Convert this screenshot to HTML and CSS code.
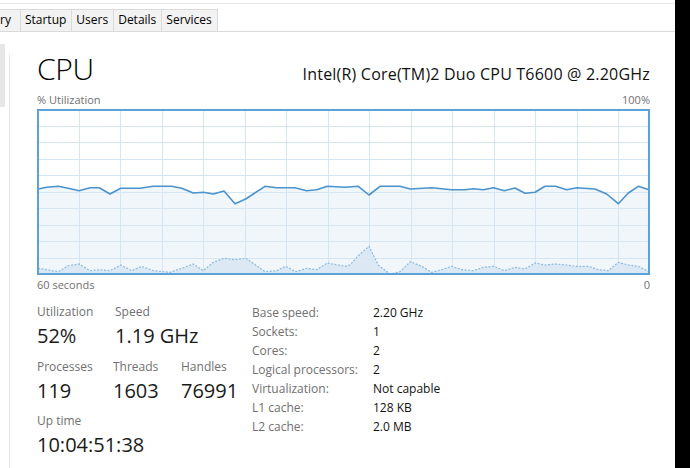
FILE: index.html
```html
<!DOCTYPE html>
<html>
<head>
<meta charset="utf-8">
<link rel="stylesheet" href="styles.css">
</head>
<body>
<div class="window">
  <div class="main">
    <div class="topline"></div>
    <div class="tabs">
      <div class="tab tab-cut">ry</div>
      <div class="tab">Startup</div>
      <div class="tab">Users</div>
      <div class="tab">Details</div>
      <div class="tab">Services</div>
    </div>
    <div class="content">
      <div class="side">
        <div class="side-thumb"></div>
        <div class="side-line"></div>
      </div>
      <div class="panel">
        <div class="header">
          <div class="title">CPU</div>
          <div class="model">Intel(R) Core(TM)2 Duo CPU T6600 @ 2.20GHz</div>
        </div>
        <div class="axis axis-top"><span>% Utilization</span><span>100%</span></div>
        <svg class="graph" width="613" height="166" viewBox="0 0 613 166">
          <polygon class="fill-total" points="1,80 9.7,78.3 21.3,77.3 31.3,79.3 42,81.7 53,78.7 62.3,78.7 73,85 83.7,79.3 103,79.3 116.3,77.3 134.7,77.3 144.7,79.3 156.3,84 166.3,83.3 176.3,85 187,82 198,94.7 208.7,90 228,77.3 239.7,78.7 258,78.7 269.7,81.7 279.7,80.7 290.3,77.3 308,78.3 321.3,77.3 332,86 343,77.3 363,77.3 373.3,80 394.7,78.7 414.7,80.7 428,80.7 436.3,79.7 446.3,80.7 456.7,78.7 467.3,81.7 478,79 488,84.3 498,83.3 508,77.3 518.7,77.3 529.7,80.7 539.7,78.7 558,80 569.7,85 581.3,94.7 591.3,84 601.3,77.3 612,80.7 612,165 1,165"/>
          <g class="grid">
            <line x1="42.5" y1="1" x2="42.5" y2="165"/>
            <line x1="83.5" y1="1" x2="83.5" y2="165"/>
            <line x1="125.5" y1="1" x2="125.5" y2="165"/>
            <line x1="166.5" y1="1" x2="166.5" y2="165"/>
            <line x1="208.5" y1="1" x2="208.5" y2="165"/>
            <line x1="249.5" y1="1" x2="249.5" y2="165"/>
            <line x1="291.5" y1="1" x2="291.5" y2="165"/>
            <line x1="332.5" y1="1" x2="332.5" y2="165"/>
            <line x1="374.5" y1="1" x2="374.5" y2="165"/>
            <line x1="415.5" y1="1" x2="415.5" y2="165"/>
            <line x1="457.5" y1="1" x2="457.5" y2="165"/>
            <line x1="498.5" y1="1" x2="498.5" y2="165"/>
            <line x1="540.5" y1="1" x2="540.5" y2="165"/>
            <line x1="581.5" y1="1" x2="581.5" y2="165"/>
            <line x1="1" y1="17.5" x2="612" y2="17.5"/>
            <line x1="1" y1="33.5" x2="612" y2="33.5"/>
            <line x1="1" y1="50.5" x2="612" y2="50.5"/>
            <line x1="1" y1="66.5" x2="612" y2="66.5"/>
            <line x1="1" y1="83.5" x2="612" y2="83.5"/>
            <line x1="1" y1="99.5" x2="612" y2="99.5"/>
            <line x1="1" y1="116.5" x2="612" y2="116.5"/>
            <line x1="1" y1="132.5" x2="612" y2="132.5"/>
            <line x1="1" y1="149.5" x2="612" y2="149.5"/>
          </g>
          <polygon class="fill-kernel" points="1,159.3 9.7,160.7 21.3,162.7 31.3,156.7 42,155 53,161.7 63,160.7 73,161.7 83.7,156 94.7,161.7 104.7,157.3 116.3,161.7 133,163.3 144.7,159.3 156.3,155 166.3,161.7 176.3,153.3 187,149.3 198,150.7 208.7,149.3 219.7,156.7 228,162.7 239.7,161.7 248.7,157.3 259,162.7 269.7,159.3 279.7,160.7 290.3,154 308,157.3 313,156 321.3,146.7 332,137.3 341.3,156 353,165 363,162.7 373.3,152.7 384.7,157.3 394.7,163.3 404.7,160.7 414.7,157.3 424.7,160.7 436.3,161.7 446.3,158.3 456.7,157.3 467.3,161.7 478,158.3 488,160 498,154 508,156 518.7,155 529.7,156 539.7,157.3 551.3,157.3 561.3,160.7 571.3,161.7 581.3,153.3 591.3,156 601.3,157.3 612,162.7 612,165 1,165"/>
          <polyline class="line-kernel" points="1,159.3 9.7,160.7 21.3,162.7 31.3,156.7 42,155 53,161.7 63,160.7 73,161.7 83.7,156 94.7,161.7 104.7,157.3 116.3,161.7 133,163.3 144.7,159.3 156.3,155 166.3,161.7 176.3,153.3 187,149.3 198,150.7 208.7,149.3 219.7,156.7 228,162.7 239.7,161.7 248.7,157.3 259,162.7 269.7,159.3 279.7,160.7 290.3,154 308,157.3 313,156 321.3,146.7 332,137.3 341.3,156 353,165 363,162.7 373.3,152.7 384.7,157.3 394.7,163.3 404.7,160.7 414.7,157.3 424.7,160.7 436.3,161.7 446.3,158.3 456.7,157.3 467.3,161.7 478,158.3 488,160 498,154 508,156 518.7,155 529.7,156 539.7,157.3 551.3,157.3 561.3,160.7 571.3,161.7 581.3,153.3 591.3,156 601.3,157.3 612,162.7"/>
          <polyline class="line-total" points="1,80 9.7,78.3 21.3,77.3 31.3,79.3 42,81.7 53,78.7 62.3,78.7 73,85 83.7,79.3 103,79.3 116.3,77.3 134.7,77.3 144.7,79.3 156.3,84 166.3,83.3 176.3,85 187,82 198,94.7 208.7,90 228,77.3 239.7,78.7 258,78.7 269.7,81.7 279.7,80.7 290.3,77.3 308,78.3 321.3,77.3 332,86 343,77.3 363,77.3 373.3,80 394.7,78.7 414.7,80.7 428,80.7 436.3,79.7 446.3,80.7 456.7,78.7 467.3,81.7 478,79 488,84.3 498,83.3 508,77.3 518.7,77.3 529.7,80.7 539.7,78.7 558,80 569.7,85 581.3,94.7 591.3,84 601.3,77.3 612,80.7"/>
          <rect class="frame" x="1" y="1" width="611" height="164"/>
        </svg>
        <div class="axis axis-bottom"><span>60 seconds</span><span>0</span></div>
        <div class="stats">
          <div class="dynamic">
            <div class="stat-row">
              <div class="stat stat-util"><div class="label">Utilization</div><div class="value">52%</div></div>
              <div class="stat"><div class="label">Speed</div><div class="value">1.19 GHz</div></div>
            </div>
            <div class="stat-row">
              <div class="stat stat-proc"><div class="label">Processes</div><div class="value">119</div></div>
              <div class="stat stat-thr"><div class="label">Threads</div><div class="value">1603</div></div>
              <div class="stat"><div class="label">Handles</div><div class="value">76991</div></div>
            </div>
            <div class="stat-row">
              <div class="stat"><div class="label">Up time</div><div class="value">10:04:51:38</div></div>
            </div>
          </div>
          <div class="specs">
            <div class="spec-label">Base speed:</div><div class="spec-value">2.20 GHz</div>
            <div class="spec-label">Sockets:</div><div class="spec-value">1</div>
            <div class="spec-label">Cores:</div><div class="spec-value">2</div>
            <div class="spec-label">Logical processors:</div><div class="spec-value">2</div>
            <div class="spec-label">Virtualization:</div><div class="spec-value">Not capable</div>
            <div class="spec-label">L1 cache:</div><div class="spec-value">128 KB</div>
            <div class="spec-label">L2 cache:</div><div class="spec-value">2.0 MB</div>
          </div>
        </div>
      </div>
    </div>
  </div>
  <div class="edge"></div>
</div>
</body>
</html>
```

FILE: styles.css
```css
html, body {
  margin: 0;
  padding: 0;
  background: #ffffff;
}

body {
  font-family: "Open Sans", "Noto Sans", "Liberation Sans", sans-serif;
  color: #1a1a1a;
  width: 690px;
  height: 468px;
  overflow: hidden;
}

.window {
  display: flex;
  height: 468px;
}

.main {
  width: 675px;
  display: flex;
  flex-direction: column;
}

.edge {
  width: 15px;
  background: #000000;
}

.topline {
  height: 3px;
  border-bottom: 1px solid #e8e8e8;
  margin-bottom: 5px;
}

.tabs {
  display: flex;
  height: 22px;
  border-bottom: 1px solid #dadada;
  align-items: stretch;
}

.tab {
  font-size: 12px;
  line-height: 20px;
  color: #000000;
  background: #f2f2f2;
  border: 1px solid #dadada;
  border-left: none;
  border-bottom: none;
  padding: 0 5px 0 4px;
}

.tab-cut {
  padding: 0 9px 0 0;
}

.content {
  flex: 1;
  display: flex;
}

.side {
  width: 10px;
  display: flex;
  gap: 4px;
}

.side-thumb {
  width: 5px;
  height: 63px;
  margin-top: 12px;
  background: #e6e6e6;
}

.side-line {
  width: 1px;
  margin-top: 22px;
  background: #e6e6e6;
}

.panel {
  flex: 1;
  padding: 19px 25px 0 27px;
  display: flex;
  flex-direction: column;
}

.header {
  display: flex;
  justify-content: space-between;
  align-items: baseline;
  height: 36px;
}

.title {
  font-size: 30px;
  font-weight: 300;
  line-height: 36px;
  color: #000000;
  letter-spacing: -0.3px;
}

.model {
  font-size: 16px;
  line-height: 20px;
  letter-spacing: 0.2px;
  color: #111111;
}

.axis {
  display: flex;
  justify-content: space-between;
  font-size: 11px;
  line-height: 14px;
  color: #707070;
}

.axis-top {
  margin-top: 6px;
  margin-bottom: 2px;
}

.axis-bottom {
  margin-top: 3px;
}

.graph {
  display: block;
}

.fill-total {
  fill: #f1f6fb;
}

.grid line {
  stroke: #d4e6f4;
  stroke-width: 1;
}

.fill-kernel {
  fill: #d9e7f2;
  fill-opacity: 0.9;
}

.line-kernel {
  fill: none;
  stroke: #8cbbe0;
  stroke-width: 1.2;
  stroke-dasharray: 2 1.5;
}

.line-total {
  fill: none;
  stroke: #4a93cc;
  stroke-width: 1.6;
  stroke-linejoin: round;
}

.frame {
  fill: none;
  stroke: #5aa2d8;
  stroke-width: 2;
}

.stats {
  display: flex;
  margin-top: 12px;
}

.dynamic {
  width: 215px;
  display: flex;
  flex-direction: column;
  gap: 6px;
}

.stat-row {
  display: flex;
}

.stat-util {
  width: 78px;
}

.stat-proc {
  width: 76px;
}

.stat-thr {
  width: 68px;
}

.label {
  font-size: 12px;
  line-height: 16px;
  color: #707070;
}

.value {
  font-size: 20px;
  line-height: 32.5px;
  color: #1a1a1a;
}

.specs {
  display: grid;
  grid-template-columns: 121px auto;
  font-size: 12px;
  line-height: 19px;
  margin-top: -1px;
  align-content: start;
}

.spec-label {
  color: #707070;
}

.spec-value {
  color: #111111;
}
```
